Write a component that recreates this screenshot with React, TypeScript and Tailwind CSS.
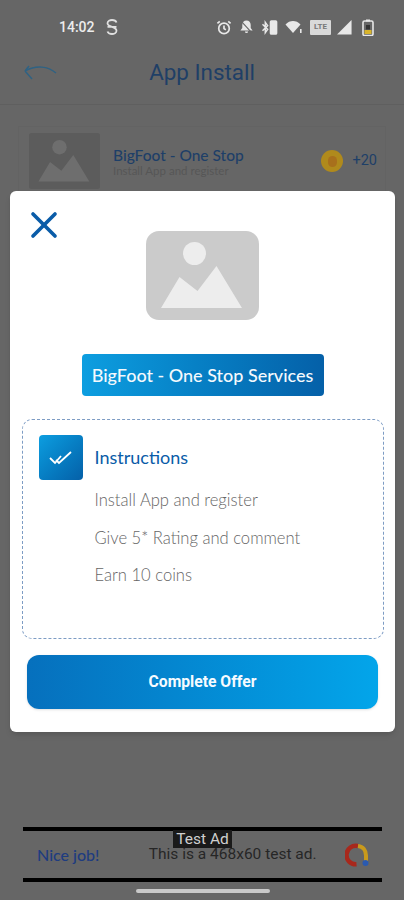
import { X } from 'lucide-react';

const lato = "font-['Lato','Noto_Sans',sans-serif]";
const roboto = "font-['Roboto','Liberation_Sans',sans-serif]";

function Placeholder({ bg, fg, radius, className }: { bg: string; fg: string; radius: number; className: string }) {
    return (
        <svg viewBox="0 0 113 89" className={className}>
            <rect x="0" y="0" width="113" height="89" rx={radius} fill={bg} />
            <circle cx="48.500" cy="22.500" r="11.500" fill={fg} />
            <path d="M15 77 L33.500 46 L51.500 60 L70.500 35 L96 77 Z" fill={fg} />
        </svg>
    );
}

function StatusIcons() {
    return (
        <div className="flex items-center gap-[7px] text-[#e8e8e8]">
            {/* alarm */}
            <svg width="16" height="17" viewBox="0 0 17 17" fill="none" stroke="currentColor" strokeWidth="1.800" className="ml-[1px]">
                <circle cx="8.500" cy="9.500" r="5.600" />
                <path d="M8.500 6.500v3.200l2 1.200M1.500 4.200 4 2M15.500 4.200 13 2" />
            </svg>
            {/* muted bell */}
            <svg width="15" height="16" viewBox="0 0 16 16" fill="currentColor">
                <path d="M8 1c-2.800 0-4.500 2-4.500 4.800v3.200L1.500 11.800h13L12.500 9V5.800C12.500 3 10.800 1 8 1ZM6.300 12.800h3.400a1.700 1.700 0 0 1-3.400 0Z" />
                <path d="M2 1.500l12 13" stroke="#666" strokeWidth="1.200" />
            </svg>
            {/* bluetooth + vibrate */}
            <svg width="16" height="17" viewBox="0 0 17 17" fill="none" stroke="currentColor" strokeWidth="1.600" className="ml-[1px]">
                <path d="M0.500 5 6 10.500l-2.500 3.500V3L6 6.500.5 12" />
                <rect x="9" y="1.500" width="6.500" height="14" rx="1" fill="currentColor" />
            </svg>
            {/* wifi */}
            <svg width="18" height="14" viewBox="0 0 17 14" fill="currentColor">
                <path d="M0 4.500C2 2 5 1 7.500 1s5.500 1 7.500 3.500L7.500 13Z" />
                <rect x="14.500" y="9" width="1.600" height="4" />
            </svg>
            {/* LTE badge */}
            <div className={`flex h-[15px] w-[21px] items-center justify-center rounded-[1px] bg-[#d9d9d9] text-[8px] font-bold leading-none text-[#777] ${roboto}`}>
                LTE
            </div>
            {/* signal */}
            <svg width="15" height="15" viewBox="0 0 16 16" fill="currentColor" className="-ml-[1px]">
                <path d="M0 15.500 15.500 0v15.500Z" />
            </svg>
            {/* battery */}
            <svg width="12" height="17" viewBox="0 0 12 17" fill="none" className="ml-[3px]">
                <rect x="1" y="2" width="10" height="14.500" rx="1.500" stroke="currentColor" strokeWidth="1.600" />
                <rect x="4" y="0.500" width="4" height="2" fill="currentColor" />
                <rect x="2.500" y="11" width="7" height="4" fill="#d9b52c" />
                <rect x="4" y="6" width="4" height="4.500" fill="#333" />
            </svg>
        </div>
    );
}

export default function App() {
    return (
        <div className="relative h-[900px] w-[404px] overflow-hidden bg-[#666666]">
            {/* page behind the dialog */}
            <div className="flex h-[46px] items-center justify-between pl-[59px] pr-[30px] pt-[8px]">
                <div className="flex items-center gap-[11px]">
                    <span className={`text-[14px] font-medium text-[#ececec] ${roboto}`}>14:02</span>
                    <svg width="12" height="16" viewBox="0 0 12 16" fill="none" stroke="#e0e0e0" strokeWidth="1.800">
                        <path d="M10.500 3.500C10 2 8 1 6 1S1.500 2 1.500 4.200M10.500 11.800C10.500 14 8 15 6 15s-4-1-4.500-2.500M1.500 7.800h9M1.500 4.200C1.500 6 3.500 7 6 7.800s4.500 2 4.500 4" />
                    </svg>
                </div>
                <StatusIcons />
            </div>
            <div className="relative flex h-[59px] items-center justify-center border-b border-[#5f5f5f] pb-[4px]">
                <svg width="34" height="18" viewBox="0 0 34 18" fill="none" stroke="#2f6283" strokeWidth="1.500" className="absolute left-[23px] top-[18px]">
                    <path d="M33 9C25 2 13 1 2 7M2 7l4-5M2 7l7 8" />
                </svg>
                <span className={`text-[22.400px] text-[#1f3f66] ${roboto}`}>App Install</span>
            </div>
            <div className="mx-[18px] mt-[21px] flex h-[70px] items-start gap-[13px] border border-[#636363] pl-[10px] pr-[8px] pt-[6px]">
                <Placeholder bg="#5c5c5c" fg="#6e6e6e" radius={4} className="h-[56px] w-[71px] shrink-0" />
                <div className={`mt-[14px] flex-1 ${lato}`}>
                    <div className="text-[15.500px] font-medium leading-[17px] text-[#1e3f68]">BigFoot - One Stop</div>
                    <div className="text-[11.500px] leading-[13px] text-[#565656]">Install App and register</div>
                </div>
                <div className="mt-[17px] flex items-center gap-[9px]">
                    <div className="flex h-[22px] w-[22px] items-center justify-center rounded-full bg-[#b08a1c]">
                        <div className="h-[11px] w-[9px] rounded-full bg-[#a8701c]" />
                    </div>
                    <span className={`text-[14.500px] text-[#1e3f68] ${roboto}`}>+20</span>
                </div>
            </div>

            {/* ad banner */}
            <div className="absolute bottom-[18px] left-[23px] flex h-[55px] w-[359px] items-center justify-between border-y-[4px] border-black pl-[14px] pr-[13px]">
                <span className={`text-[16px] font-medium leading-none text-[#1e3c80] ${lato}`}>Nice job!</span>
                <span className={`ml-[43px] text-[15.500px] leading-[13px] text-[#262626] ${roboto}`}>This is a 468x60 test ad.</span>
                <svg width="24" height="24" viewBox="0 0 24 24" fill="none" className="ml-[22px]">
                    <path d="M13 3A9.300 9.300 0 1 0 11.500 21.300" stroke="#a8281c" strokeWidth="4.500" />
                    <path d="M13 3C18 3.500 21 7.500 21 12.500V18" stroke="#c99a1c" strokeWidth="4" />
                    <circle cx="20.500" cy="20" r="3" fill="#2a5ab0" />
                </svg>
            </div>
            <div className={`absolute left-[173px] top-[830px] h-[18px] w-[59px] bg-[#1a1a1a] text-center text-[15.500px] leading-[18px] text-[#cfcfcf] ${roboto}`}>
                Test Ad
            </div>
            <div className="absolute bottom-[7px] left-[136px] h-[4px] w-[134px] rounded-full bg-[#c9c9c9]" />

            {/* dialog */}
            <div className="absolute left-[10px] top-[191px] flex h-[541px] w-[385px] flex-col items-center rounded-[6px] bg-white px-[11px] pt-[40px] shadow-md">
                <X className="absolute left-[12px] top-[12px] h-[44px] w-[44px] text-[#0a5ca8]" strokeWidth={2} absoluteStrokeWidth />
                <Placeholder bg="#cbcbcb" fg="#ededed" radius={13} className="h-[89px] w-[113px] shrink-0" />
                <div className={`mt-[34px] flex h-[42px] w-[242px] items-center justify-center rounded-[4px] bg-gradient-to-r from-[#0d9ee0] to-[#0560a8] text-[18px] font-medium text-[#f4f9fd] ${lato}`}>
                    BigFoot - One Stop Services
                </div>
                <div className="mt-[23px] h-[220px] w-[362px] rounded-[10px] border border-dashed border-[#7d9cc4] pl-[16px] pt-[15px]">
                    <div className="flex items-center gap-[12px]">
                        <div className="flex h-[45px] w-[44px] items-center justify-center rounded-[4px] bg-gradient-to-br from-[#0d9ee0] to-[#0560a8]">
                            <svg width="24" height="14" viewBox="0 0 24 14" fill="none" stroke="#ffffff" strokeWidth="1.800">
                                <path d="M1 7l5 5 6-7M7 9l3 3 12-11" />
                            </svg>
                        </div>
                        <span className={`text-[18px] text-[#0a5ca8] ${lato}`}>Instructions</span>
                    </div>
                    <div className={`ml-[56px] mt-[9px] flex flex-col gap-[15.500px] text-[16.600px] font-light leading-[22px] text-[#666666] ${lato}`}>
                        <span>Install App and register</span>
                        <span>Give 5* Rating and comment</span>
                        <span>Earn 10 coins</span>
                    </div>
                </div>
                <div className={`mt-[16px] flex h-[54px] w-[351px] items-center justify-center rounded-[12px] bg-gradient-to-r from-[#0670bd] to-[#03a5ea] text-[15.700px] font-bold text-[#f6fbff] shadow-sm ${roboto}`}>
                    Complete Offer
                </div>
            </div>
        </div>
    );
}
